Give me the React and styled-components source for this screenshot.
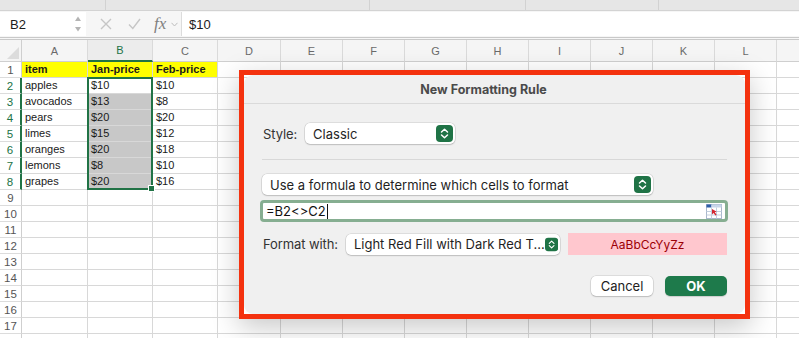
import React from "react";
import styled, { createGlobalStyle } from "styled-components";

const GlobalStyle = createGlobalStyle`
  html, body {
    margin: 0;
    padding: 0;
    background: #fff;
    overflow: hidden;
  }
  body {
    font-family: "Liberation Sans", Arial, sans-serif;
  }
`;

const Screen = styled.div`
  position: relative;
  width: 799px;
  height: 338px;
  overflow: hidden;
  display: flex;
  flex-direction: column;
  & > * {
    flex-shrink: 0;
  }
`;

const Ribbon = styled.div`
  height: 10px;
  background: #e6e6e6;
  border-bottom: 1px solid #d3d3d3;
  display: flex;
`;

const RibbonGroup = styled.div`
  width: ${(p) => p.$w}px;
  border-right: 1px solid #d2d2d2;
`;

const FormulaBar = styled.div`
  height: 26px;
  display: flex;
  background: #f6f6f6;
  border-bottom: 3px double #c9c9c9;
`;

const NameBox = styled.div`
  width: 86px;
  margin: 1px 0;
  box-sizing: border-box;
  padding: 0 4px 0 10px;
  background: #fff;
  display: flex;
  align-items: center;
  justify-content: space-between;
  font-size: 13px;
  color: #1b1b1b;
`;

const Tools = styled.div`
  width: 95px;
  display: flex;
  align-items: center;
  padding-left: 14px;
  box-sizing: border-box;
`;

const FxLabel = styled.span`
  font-family: "Liberation Serif", "Times New Roman", serif;
  font-style: italic;
  font-size: 17px;
  color: #808080;
  margin-left: 13px;
`;

const FormulaInput = styled.div`
  flex: 1;
  margin: 1px 0;
  background: #fff;
  border-left: 1px solid #dcdcdc;
  display: flex;
  align-items: center;
  padding-left: 7px;
  font-size: 13px;
  color: #1b1b1b;
`;

const Sheet = styled.div`
  display: grid;
  grid-template-columns: 22px 66px 65px 65px 63px repeat(9, 62px);
  grid-template-rows: 22px repeat(18, 16px);
`;

const Cell = styled.div`
  grid-area: ${(p) => p.$r} / ${(p) => p.$c};
  box-sizing: border-box;
  border-right: 1px solid #d8d8d8;
  border-bottom: 1px solid #d8d8d8;
  background: ${(p) => p.$fill || "#fff"};
  font-size: 11px;
  font-weight: ${(p) => (p.$bold ? 700 : 400)};
  color: #1a1a1a;
  padding-left: 3px;
  line-height: 15px;
  white-space: nowrap;
  overflow: hidden;
`;

const ColHeader = styled.div`
  grid-area: 1 / ${(p) => p.$c};
  box-sizing: border-box;
  background: ${(p) => (p.$active ? "#ececec" : "#f5f5f5")};
  border-right: 1px solid #dadada;
  border-bottom: ${(p) => (p.$active ? "2px solid #217346" : "1px solid #cfcfcf")};
  color: ${(p) => (p.$active ? "#217346" : "#6a6a6a")};
  font-size: 11px;
  display: flex;
  align-items: center;
  justify-content: center;
`;

const Corner = styled.div`
  grid-area: 1 / 1;
  box-sizing: border-box;
  background: #f5f5f5;
  border-right: 1px solid #cfcfcf;
  border-bottom: 1px solid #cfcfcf;
  display: flex;
  align-items: flex-end;
  justify-content: flex-end;
  padding: 0 2px 2px 0;
`;

const RowHeader = styled.div`
  grid-area: ${(p) => p.$r} / 1;
  box-sizing: border-box;
  background: #fff;
  border-right: ${(p) => (p.$active ? "2px solid #217346" : "1px solid #cfcfcf")};
  border-bottom: 1px solid #dcdcdc;
  color: ${(p) => (p.$active ? "#217346" : "#555")};
  font-size: 11.5px;
  display: flex;
  align-items: center;
  justify-content: center;
`;

const Selection = styled.div`
  grid-area: 3 / 3 / 10 / 4;
  margin: -1px 0 0 -1px;
  border: 2px solid #217346;
  position: relative;
  pointer-events: none;
`;

const FillHandle = styled.div`
  position: absolute;
  right: -4px;
  bottom: -4px;
  width: 5px;
  height: 5px;
  background: #217346;
  border: 1px solid #fff;
`;

const Frame = styled.div`
  position: absolute;
  left: 239px;
  top: 70px;
  width: 511px;
  height: 249px;
  box-sizing: border-box;
  border: 5px solid #f4320f;
  box-shadow: 0 8px 26px rgba(0, 0, 0, 0.22);
`;

const Dialog = styled.div`
  height: 100%;
  background: #f0f0f0;
  border-radius: 9px;
  font-family: Inter, "Liberation Sans", sans-serif;
  color: #222;
  display: flex;
  flex-direction: column;
`;

const TitleBar = styled.div`
  height: 28px;
  border-bottom: 1px solid #dadada;
  display: flex;
  align-items: center;
  justify-content: center;
  padding-right: 22px;
  font-size: 12.5px;
  font-weight: 700;
  color: #4a4a4a;
`;

const Body = styled.div`
  padding: 0 18px;
  display: flex;
  flex-direction: column;
`;

const Row = styled.div`
  display: flex;
  align-items: center;
  gap: ${(p) => p.$gap || 8}px;
  margin-top: ${(p) => p.$mt || 0}px;
  justify-content: ${(p) => p.$justify || "flex-start"};
`;

const Label = styled.span`
  font-size: 13px;
  color: #333;
  margin-left: 1px;
  letter-spacing: -0.1px;
`;

const Divider = styled.div`
  height: 1px;
  background: #d8d8d8;
  margin-top: 15px;
`;

const Popup = styled.div`
  width: ${(p) => p.$w}px;
  height: 21px;
  box-sizing: border-box;
  background: #fff;
  border-radius: 5px;
  box-shadow: 0 0 0 0.5px rgba(0, 0, 0, 0.16), 0 1px 1.5px rgba(0, 0, 0, 0.14);
  display: flex;
  align-items: center;
  justify-content: space-between;
  padding: 0 2px 0 8px;
  font-size: 13px;
  color: #1f1f1f;
  white-space: nowrap;
`;

const InputBox = styled.div`
  margin-top: 5px;
  margin-left: -2px;
  margin-right: -1px;
  height: 22px;
  box-sizing: border-box;
  border: 3px solid #86ae91;
  border-radius: 4px;
  background: #fff;
  display: flex;
  align-items: center;
  justify-content: space-between;
  padding: 0 3px;
  font-size: 13px;
  color: #111;
`;

const Caret = styled.span`
  display: inline-block;
  width: 1px;
  height: 15px;
  background: #111;
  vertical-align: middle;
  margin-left: 1px;
`;

const Preview = styled.div`
  flex: 1;
  height: 22px;
  background: #ffc7ce;
  color: #9c0006;
  font-size: 12px;
  display: flex;
  align-items: center;
  justify-content: center;
`;

const Button = styled.div`
  width: 62px;
  height: 20px;
  border-radius: 5px;
  display: flex;
  align-items: center;
  justify-content: center;
  font-size: 13px;
  background: ${(p) => (p.$primary ? "#1e7a4b" : "#fff")};
  color: ${(p) => (p.$primary ? "#fff" : "#222")};
  font-weight: ${(p) => (p.$primary ? 700 : 400)};
  box-shadow: ${(p) =>
    p.$primary
      ? "0 1px 1px rgba(0,0,0,0.15)"
      : "0 0 0 0.5px rgba(0,0,0,0.16), 0 1px 1.5px rgba(0,0,0,0.15)"};
`;

const columns = ["A", "B", "C", "D", "E", "F", "G", "H", "I", "J", "K", "L", ""];

const data = [
  ["item", "Jan-price", "Feb-price"],
  ["apples", "$10", "$10"],
  ["avocados", "$13", "$8"],
  ["pears", "$20", "$20"],
  ["limes", "$15", "$12"],
  ["oranges", "$20", "$18"],
  ["lemons", "$8", "$10"],
  ["grapes", "$20", "$16"],
];

const Stepper = () => (
  <svg width="17" height="17" viewBox="0 0 17 17">
    <rect x="0" y="0" width="17" height="17" rx="4" fill="#1f7346" />
    <path d="M5.5 7 L8.5 4.2 L11.5 7" stroke="#fff" strokeWidth="1.5" fill="none" strokeLinecap="round" strokeLinejoin="round" />
    <path d="M5.5 10 L8.5 12.8 L11.5 10" stroke="#fff" strokeWidth="1.5" fill="none" strokeLinecap="round" strokeLinejoin="round" />
  </svg>
);

const RangeIcon = () => (
  <svg width="16" height="15" viewBox="0 0 16 15">
    <rect x="0.5" y="0.5" width="15" height="14" fill="#fff" stroke="#a9b8cc" />
    <rect x="0.5" y="0.5" width="5" height="3" fill="#2f5ea8" />
    <rect x="5.5" y="0.5" width="10" height="3" fill="#c8d6ea" />
    <path d="M0.5 7.5 H15.5 M0.5 11 H15.5 M5.5 3.5 V14.5 M10.5 3.5 V14.5" stroke="#c3cfdf" strokeWidth="1" />
    <path d="M6 5 L6 10.5 L7.6 9 L9.4 11.6 L10.6 10.8 L8.8 8.2 L10.8 7.8 Z" fill="#d22630" />
  </svg>
);

function Spreadsheet() {
  const cells = [];
  cells.push(
    <Corner key="corner">
      <svg width="12" height="12" viewBox="0 0 12 12">
        <path d="M12 0 L12 12 L0 12 Z" fill="#dcdcdc" />
      </svg>
    </Corner>
  );
  columns.forEach((col, i) => {
    cells.push(
      <ColHeader key={"h" + i} $c={i + 2} $active={col === "B"}>
        {col}
      </ColHeader>
    );
  });
  for (let r = 1; r <= 18; r++) {
    // row 18 only peeks in at the bottom edge, its number is below the fold
    cells.push(
      <RowHeader key={"r" + r} $r={r + 1} $active={r >= 2 && r <= 8}>
        {r < 18 ? r : ""}
      </RowHeader>
    );
    columns.forEach((col, c) => {
      const value = data[r - 1] ? data[r - 1][c] : undefined;
      let fill;
      if (r === 1 && c < 3) fill = "#ffff00";
      if (c === 1 && r >= 3 && r <= 8) fill = "#c8c8c8";
      cells.push(
        <Cell key={c + "-" + r} $r={r + 1} $c={c + 2} $fill={fill} $bold={r === 1}>
          {value}
        </Cell>
      );
    });
  }
  return (
    <Sheet>
      {cells}
      <Selection>
        <FillHandle />
      </Selection>
    </Sheet>
  );
}

function FormattingDialog() {
  return (
    <Frame>
      <Dialog>
        <TitleBar>New Formatting Rule</TitleBar>
        <Body>
          <Row $mt={19}>
            <Label>Style:</Label>
            <Popup $w={150}>
              Classic
              <Stepper />
            </Popup>
          </Row>
          <Divider />
          <Row $mt={14}>
            <Popup $w={391}>
              Use a formula to determine which cells to format
              <Stepper />
            </Popup>
          </Row>
          <InputBox>
            <span>
              =B2&lt;&gt;C2
              <Caret />
            </span>
            <RangeIcon />
          </InputBox>
          <Row $mt={11}>
            <Label>Format with:</Label>
            <Popup $w={214}>
              Light Red Fill with Dark Red T...
              <Stepper />
            </Popup>
            <Preview>AaBbCcYyZz</Preview>
          </Row>
          <Row $mt={21} $gap={12} $justify="flex-end">
            <Button>Cancel</Button>
            <Button $primary>OK</Button>
          </Row>
        </Body>
      </Dialog>
    </Frame>
  );
}

export default function App() {
  return (
    <>
      <GlobalStyle />
      <Screen>
        <Ribbon>
          <RibbonGroup $w={105} />
          <RibbonGroup $w={263} />
          <RibbonGroup $w={155} />
          <RibbonGroup $w={132} />
        </Ribbon>
        <FormulaBar>
          <NameBox>
            B2
            <svg width="8" height="18" viewBox="0 0 8 18">
              <path d="M1 6 L4 1.5 L7 6 Z" fill="#b4b4b4" />
              <path d="M1 12 L4 16.5 L7 12 Z" fill="#b4b4b4" />
            </svg>
          </NameBox>
          <Tools>
            <svg width="12" height="12" viewBox="0 0 12 12">
              <path d="M1 1 L11 11 M11 1 L1 11" stroke="#c6c6c6" strokeWidth="1.4" />
            </svg>
            <svg width="13" height="12" viewBox="0 0 13 12" style={{ marginLeft: 16 }}>
              <path d="M1 6.5 L4.8 10.5 L12 1" stroke="#c6c6c6" strokeWidth="1.4" fill="none" />
            </svg>
            <FxLabel>fx</FxLabel>
            <svg width="7" height="5" viewBox="0 0 7 5" style={{ marginLeft: 5 }}>
              <path d="M0.5 0.8 L3.5 4 L6.5 0.8" stroke="#bdbdbd" strokeWidth="1" fill="none" />
            </svg>
          </Tools>
          <FormulaInput>$10</FormulaInput>
        </FormulaBar>
        <Spreadsheet />
        <FormattingDialog />
      </Screen>
    </>
  );
}
